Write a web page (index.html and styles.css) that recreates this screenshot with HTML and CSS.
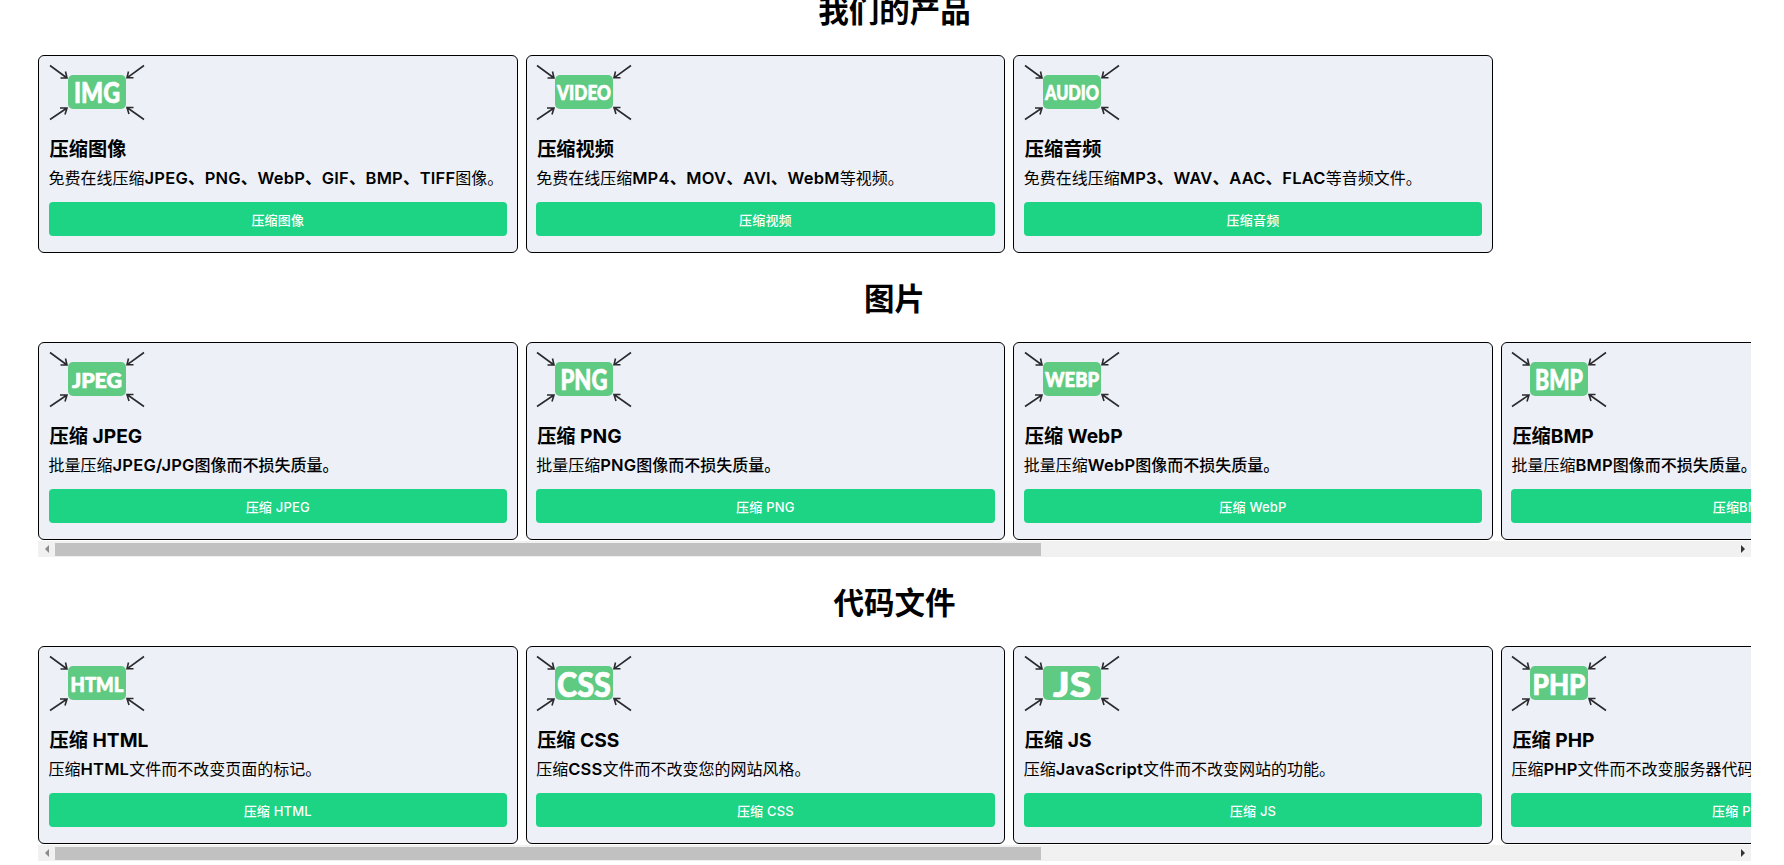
FILE: index.html
```html
<!DOCTYPE html>
<html lang="zh">
<head>
  <meta charset="UTF-8" />
  <meta name="viewport" content="width=device-width, initial-scale=1.0"/>
  <title>我们的产品</title>
  <link rel="stylesheet" href="styles.css">
</head>
<body>

  <svg class="icon-defs" width="0" height="0">
    <defs>
      <g id="arrows" class="arrow-set">
        <path d="M1 3.5 L18 16 M11.5 16 L18 16 L16.5 9.5"/>
        <path d="M95 3.5 L78 15.8 M84.5 15.8 L78 15.8 L79.5 9.5"/>
        <path d="M1 57.5 L18 46 M11 46 L18 46 L16 52.5"/>
        <path d="M95 57.5 L78 45.5 M84.5 45.5 L78 45.5 L80 52"/>
      </g>
    </defs>
  </svg>

  <div class="page">

    <!-- products -->
    <h2 class="section-title">我们的产品</h2>
    <div class="card-row">
      <div class="card">
        <svg class="card-icon" viewBox="0 0 96 60"><use href="#arrows"/><rect x="19" y="13" width="58" height="34" rx="5"/><text class="label-big" x="48" y="41" textLength="46" lengthAdjust="spacingAndGlyphs">IMG</text></svg>
        <h3 class="card-title">压缩图像</h3>
        <p class="card-text">免费在线压缩<b>JPEG、PNG、WebP、GIF、BMP、TIFF</b>图像。</p>
        <button class="card-button">压缩图像</button>
      </div>
      <div class="card">
        <svg class="card-icon" viewBox="0 0 96 60"><use href="#arrows"/><rect x="19" y="13" width="58" height="34" rx="5"/><text class="label-small" x="48" y="38" textLength="54" lengthAdjust="spacingAndGlyphs">VIDEO</text></svg>
        <h3 class="card-title">压缩视频</h3>
        <p class="card-text">免费在线压缩<b>MP4、MOV、AVI、WebM</b>等视频。</p>
        <button class="card-button">压缩视频</button>
      </div>
      <div class="card">
        <svg class="card-icon" viewBox="0 0 96 60"><use href="#arrows"/><rect x="19" y="13" width="58" height="34" rx="5"/><text class="label-small" x="48" y="38" textLength="54" lengthAdjust="spacingAndGlyphs">AUDIO</text></svg>
        <h3 class="card-title">压缩音频</h3>
        <p class="card-text">免费在线压缩<b>MP3、WAV、AAC、FLAC</b>等音频文件。</p>
        <button class="card-button">压缩音频</button>
      </div>
    </div>

    <!-- images -->
    <h2 class="section-title">图片</h2>
    <div class="card-row">
      <div class="card">
        <svg class="card-icon" viewBox="0 0 96 60"><use href="#arrows"/><rect x="19" y="13" width="58" height="34" rx="5"/><text class="label-small" x="48" y="38.5" textLength="50" lengthAdjust="spacingAndGlyphs">JPEG</text></svg>
        <h3 class="card-title">压缩 JPEG</h3>
        <p class="card-text">批量压缩<b>JPEG/JPG</b><span class="dark">图像而不损失质量。</span></p>
        <button class="card-button">压缩 JPEG</button>
      </div>
      <div class="card">
        <svg class="card-icon" viewBox="0 0 96 60"><use href="#arrows"/><rect x="19" y="13" width="58" height="34" rx="5"/><text class="label-big" x="48" y="41" textLength="47" lengthAdjust="spacingAndGlyphs">PNG</text></svg>
        <h3 class="card-title">压缩 PNG</h3>
        <p class="card-text">批量压缩<b>PNG</b><span class="dark">图像而不损失质量。</span></p>
        <button class="card-button">压缩 PNG</button>
      </div>
      <div class="card">
        <svg class="card-icon" viewBox="0 0 96 60"><use href="#arrows"/><rect x="19" y="13" width="58" height="34" rx="5"/><text class="label-small" x="48" y="38" textLength="54" lengthAdjust="spacingAndGlyphs">WEBP</text></svg>
        <h3 class="card-title">压缩 WebP</h3>
        <p class="card-text">批量压缩<b>WebP</b><span class="dark">图像而不损失质量。</span></p>
        <button class="card-button">压缩 WebP</button>
      </div>
      <div class="card">
        <svg class="card-icon" viewBox="0 0 96 60"><use href="#arrows"/><rect x="19" y="13" width="58" height="34" rx="5"/><text class="label-big" x="48" y="41" textLength="48" lengthAdjust="spacingAndGlyphs">BMP</text></svg>
        <h3 class="card-title">压缩BMP</h3>
        <p class="card-text">批量压缩<b>BMP</b><span class="dark">图像而不损失质量。</span></p>
        <button class="card-button">压缩BMP</button>
      </div>
    </div>
    <div class="scroll-bar">
      <span class="scroll-btn"><i class="arrow-left"></i></span>
      <span class="scroll-thumb"></span>
      <span class="scroll-btn"><i class="arrow-right"></i></span>
    </div>

    <!-- code files -->
    <h2 class="section-title">代码文件</h2>
    <div class="card-row">
      <div class="card">
        <svg class="card-icon" viewBox="0 0 96 60"><use href="#arrows"/><rect x="19" y="13" width="58" height="34" rx="5"/><text class="label-small" x="48" y="38.5" textLength="53" lengthAdjust="spacingAndGlyphs">HTML</text></svg>
        <h3 class="card-title">压缩 HTML</h3>
        <p class="card-text">压缩<b>HTML</b>文件而不改变页面的标记。</p>
        <button class="card-button">压缩 HTML</button>
      </div>
      <div class="card">
        <svg class="card-icon" viewBox="0 0 96 60"><use href="#arrows"/><rect x="19" y="13" width="58" height="34" rx="5"/><text class="label-xl" x="48" y="43.5" textLength="54" lengthAdjust="spacingAndGlyphs">CSS</text></svg>
        <h3 class="card-title">压缩 CSS</h3>
        <p class="card-text">压缩<b>CSS</b>文件而不改变您的网站风格。</p>
        <button class="card-button">压缩 CSS</button>
      </div>
      <div class="card">
        <svg class="card-icon" viewBox="0 0 96 60"><use href="#arrows"/><rect x="19" y="13" width="58" height="34" rx="5"/><text class="label-xl" x="48" y="43.5" textLength="38" lengthAdjust="spacingAndGlyphs">JS</text></svg>
        <h3 class="card-title">压缩 JS</h3>
        <p class="card-text">压缩<b>JavaScript</b>文件而不改变网站的功能。</p>
        <button class="card-button">压缩 JS</button>
      </div>
      <div class="card">
        <svg class="card-icon" viewBox="0 0 96 60"><use href="#arrows"/><rect x="19" y="13" width="58" height="34" rx="5"/><text class="label-big" x="48" y="41.5" textLength="53" lengthAdjust="spacingAndGlyphs">PHP</text></svg>
        <h3 class="card-title">压缩 PHP</h3>
        <p class="card-text">压缩<b>PHP</b>文件而不改变服务器代码。</p>
        <button class="card-button">压缩 PHP</button>
      </div>
    </div>
    <div class="scroll-bar">
      <span class="scroll-btn"><i class="arrow-left"></i></span>
      <span class="scroll-thumb"></span>
      <span class="scroll-btn"><i class="arrow-right"></i></span>
    </div>

  </div>

</body>
</html>
```

FILE: styles.css
```css
html, body {
  height: 100%;
  margin: 0;
  overflow: hidden;
  background-color: #fff;
  color: #000;
  font-family: Inter, "Noto Sans CJK SC", sans-serif;
}

.icon-defs {
  position: absolute;
}

.arrow-set path {
  fill: none;
  stroke: #2b2b2f;
  stroke-width: 1.6;
}

.page {
  width: 1713px;
  margin-left: 38px;
  margin-top: -7px;
}

.section-title {
  margin: 28px 0 25px;
  font-size: 30.5px;
  line-height: 36px;
  font-weight: 700;
  text-align: center;
}

.section-title:first-of-type {
  margin-top: 0;
  margin-bottom: 26px;
}

.card-row {
  display: flex;
  gap: 8px;
  overflow: hidden;
}

.card {
  flex: 0 0 479.6px;
  min-width: 0;
  box-sizing: border-box;
  height: 198px;
  padding: 6px 9.6px 16px;
  background-color: #edf0f7;
  border: 1px solid #000;
  border-radius: 6px;
}

.card-icon {
  display: block;
  width: 96px;
  height: 60px;
}

.card-icon rect {
  fill: #5fca82;
}

.card-icon text {
  fill: #fff;
  stroke: #fff;
  stroke-width: 0.7;
  stroke-linejoin: round;
  font-family: Lato, sans-serif;
  font-weight: 900;
  text-anchor: middle;
}

.label-xl {
  font-size: 35px;
}

.label-big {
  font-size: 28px;
}

.label-small {
  font-size: 20px;
}

.card-title {
  margin: 14px 0 0 1px;
  font-size: 19.2px;
  line-height: 26px;
  font-weight: 700;
}

.card-text {
  margin: 4px 0 0;
  font-size: 16px;
  line-height: 24px;
  white-space: nowrap;
}

.card-text b {
  font-size: 16.5px;
  font-weight: 600;
  letter-spacing: 0.2px;
}

.card-text .dark {
  font-weight: 500;
}

.card-button {
  display: block;
  width: 100%;
  height: 34px;
  margin-top: 12px;
  padding: 0;
  background-color: #1dd384;
  color: #fff;
  border: none;
  border-radius: 4px;
  font-family: inherit;
  font-size: 13px;
  font-weight: 500;
  letter-spacing: 0.2px;
}

.scroll-bar {
  display: flex;
  align-items: center;
  height: 16px;
  margin-top: 1px;
  background-color: #f1f1f1;
}

.scroll-btn {
  flex: 0 0 17px;
  display: flex;
  justify-content: center;
}

.scroll-thumb {
  flex: 0 0 986px;
  height: 13px;
  background-color: #c1c1c1;
}

.scroll-thumb + .scroll-btn {
  margin-left: auto;
}

.arrow-left {
  border-top: 4px solid transparent;
  border-bottom: 4px solid transparent;
  border-right: 4px solid #8a8a8a;
}

.arrow-right {
  border-top: 4px solid transparent;
  border-bottom: 4px solid transparent;
  border-left: 4px solid #333;
}
```
